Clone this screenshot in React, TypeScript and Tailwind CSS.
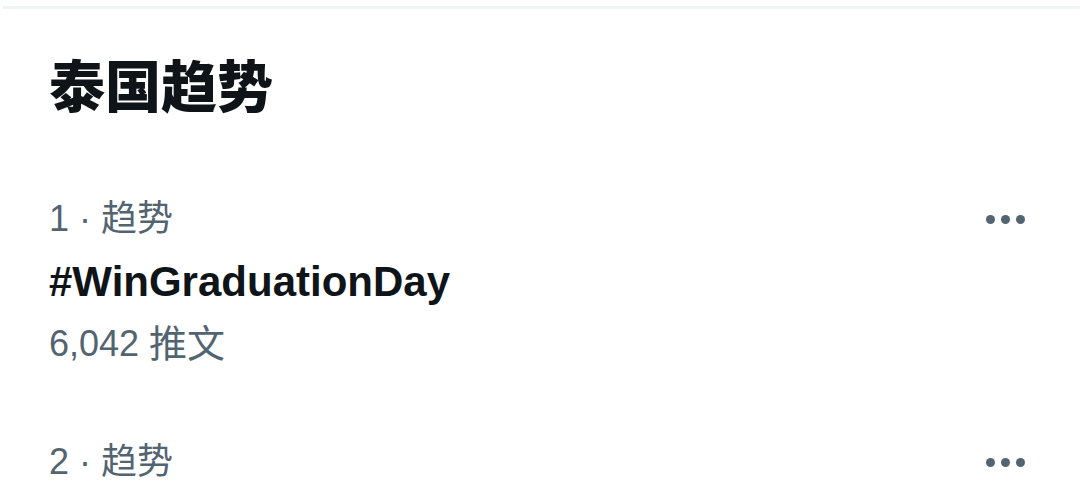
const FONT = "font-['Liberation_Sans','Noto_Sans_CJK_SC',sans-serif]";

function Dots() {
  return (
    <div className="flex items-center gap-[6px]">
      <span className="w-[9px] h-[9px] rounded-full bg-[#536471]" />
      <span className="w-[9px] h-[9px] rounded-full bg-[#536471]" />
      <span className="w-[9px] h-[9px] rounded-full bg-[#536471]" />
    </div>
  );
}

function TrendRow({ rank, tag, count }: { rank: number; tag?: string; count?: string }) {
  return (
    <div className="pl-[49px] pr-[55px]">
      <div className="flex items-center justify-between h-[62px]">
        <span className="text-[36px] text-[#536471]">{rank} · 趋势</span>
        <Dots />
      </div>
      {tag && (
        <div className="h-[62px] flex items-center text-[42px] font-bold text-[#0f1419]">{tag}</div>
      )}
      {count && (
        <div className="h-[62px] flex items-center text-[36px] text-[#536471] pt-[2px]">
          {count} <span className="ml-[10px] text-[38px]">推文</span>
        </div>
      )}
    </div>
  );
}

export default function App() {
  return (
    <div className={`w-[1080px] h-[492px] bg-white overflow-hidden ${FONT}`}>
      <div className="ml-[3px] mt-[6px] h-[3px] bg-[#eff3f4]" />
      <h1 className="mt-[47px] pl-[49px] h-[64px] flex items-center text-[56px] font-black text-[#0f1419]">
        泰国趋势
      </h1>
      <div className="mt-[68px] flex flex-col gap-[57px]">
        <TrendRow rank={1} tag="#WinGraduationDay" count="6,042" />
        <TrendRow rank={2} />
      </div>
    </div>
  );
}
